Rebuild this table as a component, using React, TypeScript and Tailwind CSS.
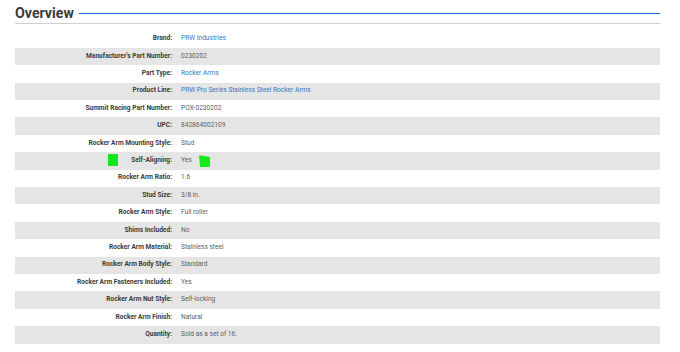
import React from "react";

type Row = { label: string; value: string; link?: boolean; marks?: boolean };

const rows: Row[] = [
  { label: "Brand:", value: "PRW Industries", link: true },
  { label: "Manufacturer's Part Number:", value: "0230202" },
  { label: "Part Type:", value: "Rocker Arms", link: true },
  { label: "Product Line:", value: "PRW Pro Series Stainless Steel Rocker Arms", link: true },
  { label: "Summit Racing Part Number:", value: "POX-0230202" },
  { label: "UPC:", value: "842864002109" },
  { label: "Rocker Arm Mounting Style:", value: "Stud" },
  { label: "Self-Aligning:", value: "Yes", marks: true },
  { label: "Rocker Arm Ratio:", value: "1.6" },
  { label: "Stud Size:", value: "3/8 in." },
  { label: "Rocker Arm Style:", value: "Full roller" },
  { label: "Shims Included:", value: "No" },
  { label: "Rocker Arm Material:", value: "Stainless steel" },
  { label: "Rocker Arm Body Style:", value: "Standard" },
  { label: "Rocker Arm Fasteners Included:", value: "Yes" },
  { label: "Rocker Arm Nut Style:", value: "Self-locking" },
  { label: "Rocker Arm Finish:", value: "Natural" },
  { label: "Quantity:", value: "Sold as a set of 16." },
];

export default function App() {
  return (
    <div
      className="w-[680px] h-[352px] bg-white pl-[15px] pr-[20px] overflow-hidden"
      style={{ fontFamily: "Roboto, 'Liberation Sans', sans-serif" }}
    >
      <div className="flex items-center pt-[5px] pb-[2px] border-b border-[#cfcfcf]">
        <h2 className="text-[14.2px] leading-[16px] font-bold text-[#3a3a3a]">Overview</h2>
        <div className="flex-1 h-px bg-[#1f6fd0] ml-[5px] shadow-[0_0_1px_#6fa3e0]" />
      </div>
      <div className="mt-[6.5px]">
        {rows.map((r, i) => (
          <div
            key={r.label}
            className={`relative flex items-center h-[17.4px] text-[6.6px] ${i % 2 === 1 ? "bg-[#e5e5e5]" : ""}`}
          >
            <div className="w-[166px] shrink-0 text-right pr-[9px] font-bold text-[#3c3c3c]">{r.label}</div>
            <div className={r.link ? "text-[#3575c4]" : "text-[#5e5e5e]"}>{r.value}</div>
            {r.marks && (
              <>
                <div className="absolute left-[93px] top-[2px] w-[10px] h-[12px] bg-[#12e81a] rounded-[1px]" />
                <div className="absolute left-[184px] top-[3px] w-[11px] h-[12px] bg-[#12e81a] rounded-[1px] [clip-path:polygon(0_0,100%_15%,100%_100%,10%_100%)]" />
              </>
            )}
          </div>
        ))}
      </div>
    </div>
  );
}
